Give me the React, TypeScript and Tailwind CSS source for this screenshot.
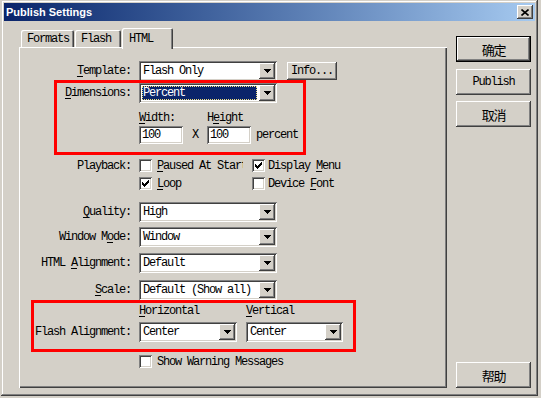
import React from 'react';

const ui = "font-['Liberation_Mono',monospace] text-[12px] tracking-[-1.2px] leading-none text-black";
const raised = "bg-[#d4d0c8] shadow-[inset_-1px_-1px_#404040,inset_1px_1px_#fff,inset_-2px_-2px_#808080,inset_2px_2px_#d4d0c8]";
const sunken = "bg-white shadow-[inset_1px_1px_#808080,inset_-1px_-1px_#fff,inset_2px_2px_#404040,inset_-2px_-2px_#d4d0c8]";

function U({ children }: { children: React.ReactNode }) {
  return <span className="underline underline-offset-2">{children}</span>;
}

function Arrow() {
  return (
    <svg width="7" height="4" viewBox="0 0 7 4" shapeRendering="crispEdges">
      <path d="M0 0h7L3.5 4z" fill="#000" />
    </svg>
  );
}

function Select({ value, className, focused }: { value: string; className: string; focused?: boolean }) {
  return (
    <div className={`flex h-[20px] shrink-0 p-[2px] ${sunken} ${className}`}>
      <div className="flex flex-1 items-center py-[1px] pr-[2px] pl-[1px]">
        {focused ? (
          <span className="flex h-full w-full items-center bg-[#0a246a] pl-[1px] text-white outline-1 -outline-offset-1 outline-dotted outline-[#f0e080]">
            {value}
          </span>
        ) : (
          <span className="pl-[1px]">{value}</span>
        )}
      </div>
      <div className={`flex w-[16px] items-center justify-center ${raised}`}>
        <Arrow />
      </div>
    </div>
  );
}

function Check({ checked }: { checked?: boolean }) {
  return (
    <div className={`flex h-[13px] w-[13px] shrink-0 items-center justify-center ${sunken}`}>
      {checked && (
        <svg width="7" height="7" viewBox="0 0 7 7" shapeRendering="crispEdges">
          <path d="M0 2l2 2 5-4v3L2 7 0 5z" fill="#000" />
        </svg>
      )}
    </div>
  );
}

function Btn({ children, def, cjk, className }: { children: React.ReactNode; def?: boolean; cjk?: boolean; className?: string }) {
  const txt = cjk ? "font-['Noto_Sans_CJK_SC',sans-serif] text-[13px] leading-none text-black" : ui;
  return (
    <div className={`h-[26px] w-[75px] ${def ? 'border border-black' : ''} ${className ?? ''}`}>
      <div className={`flex h-full w-full items-center justify-center ${raised} ${txt}`}>{children}</div>
    </div>
  );
}

function Row({ label, className, children }: { label?: React.ReactNode; className: string; children?: React.ReactNode }) {
  return (
    <div className={`flex items-center ${className}`}>
      <div className="mr-[8px] w-[112px] shrink-0 text-right">{label}</div>
      {children}
    </div>
  );
}

export default function App() {
  return (
    <div className={`relative h-[398px] w-[541px] overflow-hidden bg-[#d4d0c8] ${ui}`}>
      <div className="ml-[1px] flex h-[396px] w-[537px] flex-col bg-[#d4d0c8] p-[3px] shadow-[inset_-1px_-1px_#404040,inset_1px_1px_#d4d0c8,inset_-2px_-2px_#808080,inset_2px_2px_#fff]">
        {/* title bar */}
        <div className="flex h-[18px] items-center justify-between bg-linear-to-r from-[#0a246a] to-[#a6caf0] pr-[2px] pl-[2px]">
          <span className="font-['Liberation_Sans',sans-serif] text-[11px] font-bold tracking-normal text-white">Publish Settings</span>
          <div className={`flex h-[14px] w-[16px] items-center justify-center ${raised}`}>
            <svg width="8" height="7" viewBox="0 0 8 7">
              <path d="M0.5 0.5l7 6M7.5 0.5l-7 6" stroke="#000" strokeWidth="1.6" />
            </svg>
          </div>
        </div>

        <div className="flex flex-1">
          {/* left: tabs + panel */}
          <div className="ml-[15px] mt-[7px] flex w-[428px] flex-col">
            <div className="flex h-[19px] items-end">
              <div className="ml-[2px] flex h-[17px] w-[53px] items-center rounded-t-[2px] pl-[6px] shadow-[inset_1px_1px_#fff,inset_-1px_0_#404040,inset_-2px_0_#808080]">Formats</div>
              <div className="ml-[1px] flex h-[17px] w-[46px] items-center rounded-t-[2px] pl-[6px] shadow-[inset_1px_1px_#fff,inset_-1px_0_#404040,inset_-2px_0_#808080]">Flash</div>
              <div className="relative z-10 -mb-[2px] ml-[1px] flex h-[21px] w-[51px] items-start rounded-t-[2px] bg-[#d4d0c8] pt-[5px] pl-[7px] shadow-[inset_1px_1px_#fff,inset_-1px_0_#404040,inset_-2px_0_#808080]">HTML</div>
            </div>
            <div className="flex h-[341px] flex-col shadow-[inset_1px_1px_#fff,inset_-1px_-1px_#404040,inset_-2px_-2px_#808080]">
              <Row className="mt-[14px] h-[20px]" label={<><U>T</U>emplate:</>}>
                <Select value="Flash Only" className="w-[138px]" />
                <div className={`ml-[10px] flex h-[18px] w-[50px] items-center justify-center ${raised}`}>Info...</div>
              </Row>
              <Row className="mt-[2px] h-[20px]" label={<><U>D</U>imensions:</>}>
                <Select value="Percent" className="w-[138px]" focused />
              </Row>
              <Row className="mt-[9px] h-[12px]">
                <span className="w-[68px]"><U>W</U>idth:</span>
                <span>H<U>e</U>ight</span>
              </Row>
              <Row className="mt-[2px] h-[18px]">
                <div className={`flex h-[18px] w-[44px] items-center pl-[3px] ${sunken}`}>100</div>
                <span className="w-[24px] text-center">X</span>
                <div className={`flex h-[18px] w-[44px] items-center pl-[3px] ${sunken}`}>100</div>
                <span className="ml-[5px]">percent</span>
              </Row>
              <Row className="mt-[15px] h-[13px]" label="Playback:">
                <Check />
                <span className="ml-[5px] w-[95px]">
                  <span className="block w-[86px] overflow-hidden whitespace-nowrap"><U>P</U>aused At Start</span>
                </span>
                <Check checked />
                <span className="ml-[3px]">Display <U>M</U>enu</span>
              </Row>
              <Row className="mt-[5px] h-[13px]">
                <Check checked />
                <span className="ml-[5px] w-[95px]"><U>L</U>oop</span>
                <Check />
                <span className="ml-[3px]">Device <U>F</U>ont</span>
              </Row>
              <Row className="mt-[12px] h-[20px]" label={<><U>Q</U>uality:</>}>
                <Select value="High" className="w-[138px]" />
              </Row>
              <Row className="mt-[5px] h-[20px]" label={<>Window M<U>o</U>de:</>}>
                <Select value="Window" className="w-[138px]" />
              </Row>
              <Row className="mt-[6px] h-[20px]" label={<>HTML <U>A</U>lignment:</>}>
                <Select value="Default" className="w-[138px]" />
              </Row>
              <Row className="mt-[7px] h-[20px]" label={<><U>S</U>cale:</>}>
                <Select value="Default (Show all)" className="w-[138px]" />
              </Row>
              <Row className="mt-[5px] h-[12px]">
                <span className="w-[107px]"><U>H</U>orizontal</span>
                <span><U>V</U>ertical</span>
              </Row>
              <Row className="mt-[5px] h-[20px]" label="Flash Alignment:">
                <Select value="Center" className="w-[98px]" />
                <Select value="Center" className="ml-[9px] w-[97px]" />
              </Row>
              <Row className="mt-[13px] h-[13px]">
                <Check />
                <span className="ml-[5px]">Show Warning Messages</span>
              </Row>
            </div>
          </div>

          {/* right: buttons */}
          <div className="ml-[9px] mt-[15px] flex h-[352px] flex-col">
            <Btn def cjk>确定</Btn>
            <Btn className="mt-[7px]">Publish</Btn>
            <Btn className="mt-[6px]" cjk>取消</Btn>
            <Btn className="mt-auto" cjk>帮助</Btn>
          </div>
        </div>
      </div>

      {/* red annotation boxes */}
      <div className="absolute top-[80px] left-[54px] h-[75px] w-[252px] border-[3px] border-[#ff0000]" />
      <div className="absolute top-[300px] left-[31px] h-[52px] w-[325px] border-[3px] border-[#ff0000]" />
    </div>
  );
}
